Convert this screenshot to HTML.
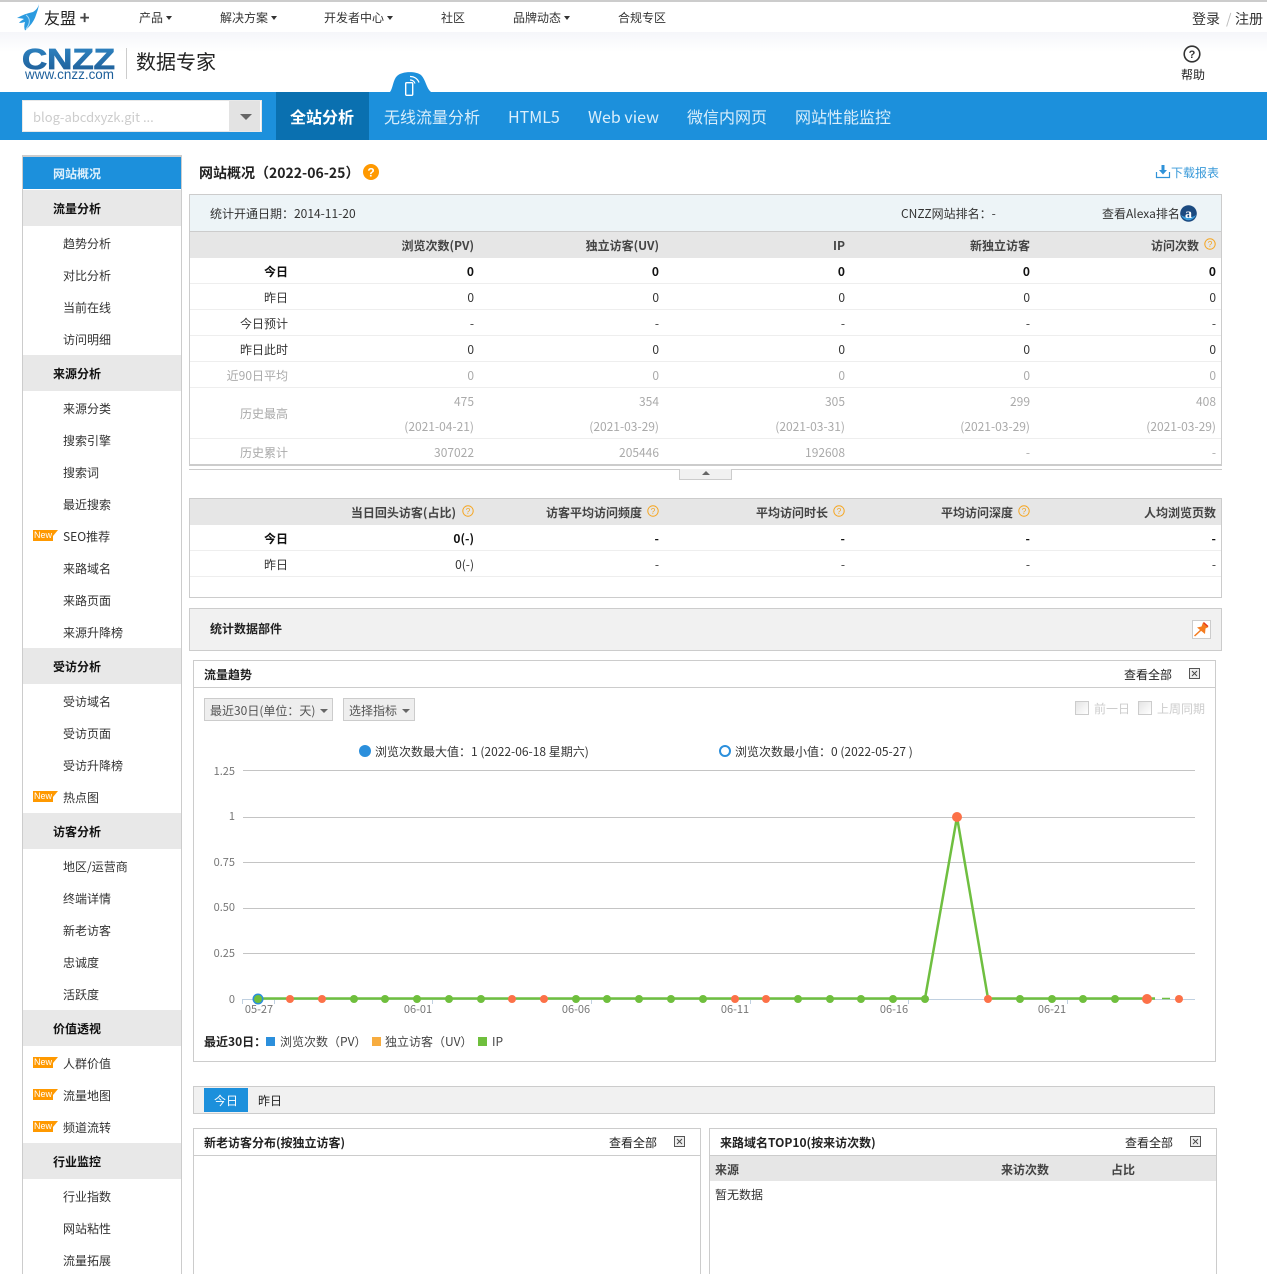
<!DOCTYPE html>
<html lang="zh-CN">
<head>
<meta charset="utf-8">
<title>CNZZ 网站概况</title>
<style>
*{box-sizing:border-box}
html{margin:0;padding:0;background:#fff;width:1267px;height:1274px;overflow:hidden}
body{margin:0;padding:0;background:#fff;position:relative;width:1267px;height:1274px;overflow:hidden;font:12px/20px "Noto Sans CJK SC","Liberation Sans",sans-serif;color:#333}
.a,.t{position:absolute}
.t{white-space:nowrap;height:20px;line-height:20px;transform:translateY(1px)}
.b{font-weight:bold}
.arr:after{content:"";display:inline-block;margin-left:3px;vertical-align:2px;border:3px solid transparent;border-top:4px solid #333;border-bottom:0}
.arr2:after{content:"";display:inline-block;margin-left:5px;vertical-align:2px;border:4px solid transparent;border-top:4px solid #666;border-bottom:0}
.g{position:absolute;left:23px;width:158px;height:36px;background:#e8e8e8;font-weight:bold;color:#111;line-height:38px;padding-left:30px}
.i{position:absolute;left:63px;height:20px;line-height:20px;white-space:nowrap;color:#333;transform:translateY(1px)}
.n{position:absolute;left:33px;width:20px;height:11px;background:#f90;color:#fff;font:9px/11px "Liberation Sans",sans-serif;padding-left:1px}
.n:after{content:"";position:absolute;left:20px;top:0;border-left:5px solid #f90;border-bottom:6px solid transparent}
.tab{position:absolute;top:106px;height:20px;line-height:20px;font-size:16px;color:#d9eefb;white-space:nowrap}
.panel{position:absolute;border:1px solid #ccc;background:#fff}
.r{position:absolute;left:190px;width:1031px;height:26px;line-height:26px;border-bottom:1px solid #eee;color:#333}
.r span{position:absolute;top:1px;white-space:nowrap}
.l{right:933px}.c1{right:747px}.c2{right:562px}.c3{right:376px}.c4{right:191px}.c5{right:5px}
.h{background:#e6e6e6;font-weight:bold;border-bottom:0;color:#444}
.bd{font-weight:bold;color:#111}
.gy{color:#aaa}
.nb{border-bottom:0}
</style>
</head>
<body>
<!-- top bar -->
<div class="a" style="left:0;top:0;width:1267px;height:2px;background:#ccc"></div>
<div class="a" style="left:0;top:32px;width:1267px;height:20px;background:linear-gradient(#f5f6fa,#fff)"></div>
<svg class="a" style="left:16px;top:3px" width="26" height="28" viewBox="0 0 26 28"><path d="M23 1 C22 5 20 7 17 9 C12 10 6 12 1 15 C4 15 6 15.500 8 16 C6 17 4 18.500 3 20 C5 20 7 19.500 9 19 C8 22 8 25 9 27.500 C13 24 18 19 20 12 C21.500 8 22.500 5 23 1Z" fill="#2b9be0"/><path d="M10 12 C14 15 15 20 10 26" stroke="#a8d8f5" stroke-width="1" fill="none"/></svg>
<div class="t" style="left:44px;top:6px;font-size:16px;color:#222">友盟 <span style="font-size:17px;font-weight:bold;color:#444">+</span></div>
<div class="t arr" style="left:139px;top:7px">产品</div>
<div class="t arr" style="left:220px;top:7px">解决方案</div>
<div class="t arr" style="left:324px;top:7px">开发者中心</div>
<div class="t" style="left:441px;top:7px">社区</div>
<div class="t arr" style="left:513px;top:7px">品牌动态</div>
<div class="t" style="left:618px;top:7px">合规专区</div>
<div class="t" style="left:1192px;top:8px;font-size:14px">登录</div>
<div class="t" style="left:1226px;top:8px;font-size:14px;color:#bbb">/</div>
<div class="t" style="left:1235px;top:8px;font-size:14px">注册</div>

<!-- logo -->
<svg class="a" style="left:20px;top:44px" width="100" height="40" viewBox="0 0 100 40">
<defs><linearGradient id="lg" x1="0" y1="0" x2="0" y2="1"><stop offset="0" stop-color="#2f86c4"/><stop offset="1" stop-color="#1d5a94"/></linearGradient></defs>
<text x="2" y="25" font-family="Liberation Sans" font-weight="bold" font-size="29" textLength="93" lengthAdjust="spacingAndGlyphs" fill="url(#lg)" stroke="url(#lg)" stroke-width=".8">CNZZ</text>
<text x="5" y="35" font-family="Liberation Sans" font-size="14" textLength="89" lengthAdjust="spacingAndGlyphs" fill="#1d5f9b">www.cnzz.com</text>
</svg>
<div class="a" style="left:126px;top:48px;width:1px;height:31px;background:#ccc"></div>
<div class="t" style="left:136px;top:50px;font-size:20px;color:#222">数据专家</div>
<svg class="a" style="left:1183px;top:45px" width="18" height="18" viewBox="0 0 18 18"><circle cx="9" cy="9" r="7.8" fill="none" stroke="#333" stroke-width="1.6"/><text x="9" y="13" text-anchor="middle" font-family="Liberation Sans" font-weight="bold" font-size="11" fill="#333">?</text></svg>
<div class="t" style="left:1181px;top:64px;color:#222">帮助</div>

<!-- nav -->
<div class="a" style="left:0;top:92px;width:1267px;height:48px;background:#1c90dc"></div>
<svg class="a" style="left:388px;top:70px" width="46" height="36" viewBox="0 0 46 36">
<path d="M2 22 C5 18 5 10 9 6 C14 1 28 1 33 5 C38 10 38 18 43 22Z" fill="#1c90dc"/>
<rect x="17.700" y="12.700" width="7" height="12.600" rx="1" fill="none" stroke="#fff" stroke-width="1.400"/>
<path d="M22 10 A5 5 0 0 1 27 13.500 M22 6.500 A9 9 0 0 1 31 12.500" fill="none" stroke="#fff" stroke-width="1.200"/>
</svg>
<div class="a" style="left:22px;top:100px;width:240px;height:32px;background:#fff;border:1px solid #e8e8e8"></div>
<div class="a" style="left:229px;top:101px;width:31px;height:30px;background:#e3e3e3"></div>
<div class="a" style="left:240px;top:114px;border:6px solid transparent;border-top:6px solid #666;border-bottom:0"></div>
<div class="t" style="left:33px;top:106px;font-size:13px;color:#ccc">blog-abcdxyzk.git ...</div>
<div class="a" style="left:276px;top:92px;width:93px;height:48px;background:#0a70b0"></div>
<div class="tab b" style="left:290px;color:#fff">全站分析</div>
<div class="tab" style="left:384px">无线流量分析</div>
<div class="tab" style="left:508px">HTML5</div>
<div class="tab" style="left:588px">Web view</div>
<div class="tab" style="left:687px">微信内网页</div>
<div class="tab" style="left:795px">网站性能监控</div>

<!-- sidebar -->
<div class="a" style="left:22px;top:155px;width:160px;height:1130px;border:1px solid #ccc;border-top:2px solid #ccc;border-bottom:0"></div>
<div class="a" style="left:23px;top:157px;width:158px;height:32px;background:#1c90dc;color:#dff1fc;font-weight:bold;line-height:34px;padding-left:30px">网站概况</div>
<div class="g" style="top:190px">流量分析</div>
<div class="i" style="top:233px">趋势分析</div>
<div class="i" style="top:265px">对比分析</div>
<div class="i" style="top:297px">当前在线</div>
<div class="i" style="top:329px">访问明细</div>
<div class="g" style="top:355px">来源分析</div>
<div class="i" style="top:398px">来源分类</div>
<div class="i" style="top:430px">搜索引擎</div>
<div class="i" style="top:462px">搜索词</div>
<div class="i" style="top:494px">最近搜索</div>
<div class="n" style="top:530px">New</div><div class="i" style="top:526px">SEO推荐</div>
<div class="i" style="top:558px">来路域名</div>
<div class="i" style="top:590px">来路页面</div>
<div class="i" style="top:622px">来源升降榜</div>
<div class="g" style="top:648px">受访分析</div>
<div class="i" style="top:691px">受访域名</div>
<div class="i" style="top:723px">受访页面</div>
<div class="i" style="top:755px">受访升降榜</div>
<div class="n" style="top:791px">New</div><div class="i" style="top:787px">热点图</div>
<div class="g" style="top:813px">访客分析</div>
<div class="i" style="top:856px">地区/运营商</div>
<div class="i" style="top:888px">终端详情</div>
<div class="i" style="top:920px">新老访客</div>
<div class="i" style="top:952px">忠诚度</div>
<div class="i" style="top:984px">活跃度</div>
<div class="g" style="top:1010px">价值透视</div>
<div class="n" style="top:1057px">New</div><div class="i" style="top:1053px">人群价值</div>
<div class="n" style="top:1089px">New</div><div class="i" style="top:1085px">流量地图</div>
<div class="n" style="top:1121px">New</div><div class="i" style="top:1117px">频道流转</div>
<div class="g" style="top:1143px">行业监控</div>
<div class="i" style="top:1186px">行业指数</div>
<div class="i" style="top:1218px">网站粘性</div>
<div class="i" style="top:1250px">流量拓展</div>

<!-- title -->
<div class="t b" style="left:199px;top:162px;font-size:14px;color:#222">网站概况（2022-06-25）</div>
<svg class="a" style="left:363px;top:164px" width="16" height="16" viewBox="0 0 16 16"><circle cx="8" cy="8" r="8" fill="#f90"/><text x="8" y="12.300" text-anchor="middle" font-family="Liberation Sans" font-weight="bold" font-size="12" fill="#fff">?</text></svg>
<svg class="a" style="left:1155px;top:164px" width="16" height="15" viewBox="0 0 16 15"><path d="M1.500 8 V13.500 H14.500 V8" fill="none" stroke="#2f92d8" stroke-width="1.200"/><path d="M6.500 1 H9.500 V6 H12 L8 10.500 L4 6 H6.500Z" fill="#2f92d8"/></svg>
<div class="t" style="left:1171px;top:162px;color:#3a9ad9">下载报表</div>

<!-- summary table -->
<div class="panel" style="left:189px;top:194px;width:1033px;height:272px;border-width:1px 1px 2px 1px"></div>
<div class="a" style="left:190px;top:195px;width:1031px;height:37px;background:#edf4f7;border-bottom:1px solid #ccc"></div>
<div class="t" style="left:210px;top:203px">统计开通日期：2014-11-20</div>
<div class="t" style="left:901px;top:203px">CNZZ网站排名：-</div>
<div class="t" style="left:1102px;top:203px">查看Alexa排名</div>
<svg class="a" style="left:1180px;top:205px" width="17" height="17" viewBox="0 0 17 17"><circle cx="8.500" cy="8.500" r="8.300" fill="#1b4a80"/><path d="M1 10 A8 8 0 0 0 16 10 A9 5 0 0 1 1 10Z" fill="#3a9ad9"/><text x="8.500" y="13" text-anchor="middle" font-family="Liberation Serif" font-weight="bold" font-size="14" fill="#fff">a</text></svg>

<div class="r h" style="top:232px;height:26px;line-height:26px"><span class="c1">浏览次数(PV)</span><span class="c2">独立访客(UV)</span><span class="c3">IP</span><span class="c4">新独立访客</span><span style="right:22px">访问次数</span></div>
<svg class="a" style="left:1204px;top:238px" width="12" height="12" viewBox="0 0 12 12"><circle cx="6" cy="6" r="5.200" fill="none" stroke="#f5a623" stroke-width="1"/><text x="6" y="9" text-anchor="middle" font-family="Liberation Sans" font-size="8.500" fill="#f5a623">?</text></svg>

<div class="r bd" style="top:258px"><span class="l">今日</span><span class="c1">0</span><span class="c2">0</span><span class="c3">0</span><span class="c4">0</span><span class="c5">0</span></div>
<div class="r" style="top:284px"><span class="l">昨日</span><span class="c1">0</span><span class="c2">0</span><span class="c3">0</span><span class="c4">0</span><span class="c5">0</span></div>
<div class="r" style="top:310px"><span class="l">今日预计</span><span class="c1">-</span><span class="c2">-</span><span class="c3">-</span><span class="c4">-</span><span class="c5">-</span></div>
<div class="r" style="top:336px"><span class="l">昨日此时</span><span class="c1">0</span><span class="c2">0</span><span class="c3">0</span><span class="c4">0</span><span class="c5">0</span></div>
<div class="r gy" style="top:362px"><span class="l">近90日平均</span><span class="c1">0</span><span class="c2">0</span><span class="c3">0</span><span class="c4">0</span><span class="c5">0</span></div>
<div class="r gy" style="top:388px;height:51px"><span class="l" style="top:13px">历史最高</span><span class="c1">475</span><span class="c2">354</span><span class="c3">305</span><span class="c4">299</span><span class="c5">408</span>
<span class="c1" style="top:26px">(2021-04-21)</span><span class="c2" style="top:26px">(2021-03-29)</span><span class="c3" style="top:26px">(2021-03-31)</span><span class="c4" style="top:26px">(2021-03-29)</span><span class="c5" style="top:26px">(2021-03-29)</span></div>
<div class="r gy nb" style="top:439px"><span class="l">历史累计</span><span class="c1">307022</span><span class="c2">205446</span><span class="c3">192608</span><span class="c4">-</span><span class="c5">-</span></div>
<div class="a" style="left:189px;top:469px;width:1033px;height:1px;background:#ccc"></div>
<div class="a" style="left:679px;top:469px;width:53px;height:11px;background:#f1f1f1;border:1px solid #ccc;border-top:0"></div>
<div class="a" style="left:702px;top:471px;border:4px solid transparent;border-bottom:4px solid #666;border-top:0"></div>

<!-- second table -->
<div class="panel" style="left:189px;top:498px;width:1033px;height:100px"></div>
<div class="r h" style="top:499px"><span style="right:765px">当日回头访客(占比)</span><span style="right:579px">访客平均访问频度</span><span style="right:393px">平均访问时长</span><span style="right:208px">平均访问深度</span><span class="c5">人均浏览页数</span></div>
<svg class="a" style="left:462px;top:505px" width="12" height="12" viewBox="0 0 12 12"><circle cx="6" cy="6" r="5.200" fill="none" stroke="#f5a623"/><text x="6" y="9" text-anchor="middle" font-family="Liberation Sans" font-size="8.500" fill="#f5a623">?</text></svg>
<svg class="a" style="left:647px;top:505px" width="12" height="12" viewBox="0 0 12 12"><circle cx="6" cy="6" r="5.200" fill="none" stroke="#f5a623"/><text x="6" y="9" text-anchor="middle" font-family="Liberation Sans" font-size="8.500" fill="#f5a623">?</text></svg>
<svg class="a" style="left:833px;top:505px" width="12" height="12" viewBox="0 0 12 12"><circle cx="6" cy="6" r="5.200" fill="none" stroke="#f5a623"/><text x="6" y="9" text-anchor="middle" font-family="Liberation Sans" font-size="8.500" fill="#f5a623">?</text></svg>
<svg class="a" style="left:1018px;top:505px" width="12" height="12" viewBox="0 0 12 12"><circle cx="6" cy="6" r="5.200" fill="none" stroke="#f5a623"/><text x="6" y="9" text-anchor="middle" font-family="Liberation Sans" font-size="8.500" fill="#f5a623">?</text></svg>
<div class="r bd" style="top:525px"><span class="l">今日</span><span class="c1">0(-)</span><span class="c2">-</span><span class="c3">-</span><span class="c4">-</span><span class="c5">-</span></div>
<div class="r" style="top:551px"><span class="l">昨日</span><span class="c1">0(-)</span><span class="c2">-</span><span class="c3">-</span><span class="c4">-</span><span class="c5">-</span></div>

<!-- widgets bar -->
<div class="panel" style="left:189px;top:608px;width:1033px;height:43px;background:#f1f1f1"></div>
<div class="t b" style="left:210px;top:618px;color:#222">统计数据部件</div>
<svg class="a" style="left:1192px;top:620px" width="19" height="19" viewBox="0 0 19 19"><rect x=".5" y=".5" width="18" height="18" fill="#fff" stroke="#ccc"/><path d="M11 2.500 L16.500 7 L13.500 8.500 L13 14 L5 7.500 L9.500 6.500Z" fill="#f57c1f"/><path d="M9 10 L2.500 16" stroke="#f57c1f" stroke-width="1.500"/><path d="M11.500 2.500 L16 6.500" stroke="#e8321a" stroke-width="1.200"/></svg>

<!-- chart panel -->
<div class="panel" style="left:193px;top:660px;width:1023px;height:402px"></div>
<div class="a" style="left:194px;top:687px;width:1021px;height:1px;background:#ccc"></div>
<div class="t b" style="left:204px;top:664px;color:#222">流量趋势</div>
<div class="t" style="left:1124px;top:664px;color:#222">查看全部</div>
<svg class="a" style="left:1189px;top:668px" width="11" height="11" viewBox="0 0 11 11"><rect x=".5" y=".5" width="10" height="10" fill="#eee" stroke="#555"/><path d="M3 3 L8 8 M8 3 L3 8" stroke="#444" stroke-width=".9"/></svg>
<div class="a" style="left:204px;top:698px;width:129px;height:23px;background:#eee;border:1px solid #ccc"></div>
<div class="t arr2" style="left:210px;top:700px;color:#555">最近30日(单位：天)</div>
<div class="a" style="left:343px;top:698px;width:72px;height:23px;background:#eee;border:1px solid #ccc"></div>
<div class="t arr2" style="left:349px;top:700px;color:#555">选择指标</div>
<div class="a" style="left:1075px;top:701px;width:14px;height:14px;border:1px solid #ccc;background:linear-gradient(135deg,#e4e4e4,#fff)"></div>
<div class="t" style="left:1094px;top:698px;color:#ccc">前一日</div>
<div class="a" style="left:1138px;top:701px;width:14px;height:14px;border:1px solid #ccc;background:linear-gradient(135deg,#e4e4e4,#fff)"></div>
<div class="t" style="left:1157px;top:698px;color:#ccc">上周同期</div>

<svg class="a" style="left:0;top:740px" width="1267" height="280" viewBox="0 740 1267 280" font-family="'Noto Sans CJK SC','Liberation Sans',sans-serif">
<circle cx="365" cy="751" r="6" fill="#2b8fdc"/>
<circle cx="725" cy="751" r="5" fill="#fff" stroke="#2b8fdc" stroke-width="2"/>
<g stroke="#c4c4c4" stroke-width="1"><path d="M243 770.500H1195M243 817.500H1195M243 862.500H1195M243 908.500H1195M243 953.500H1195"/></g>
<path d="M243 999.500H1195" stroke="#c0d0e0"/>
<path d="M242.500 999V1004M274.500 999V1004M432.500 999V1004M591.500 999V1004M750.500 999V1004M908.500 999V1004M1067.500 999V1004" stroke="#c0d0e0"/>
<g font-size="11" fill="#777" text-anchor="end"><text x="235" y="775">1.25</text><text x="235" y="820">1</text><text x="235" y="866">0.75</text><text x="235" y="911">0.50</text><text x="235" y="957">0.25</text><text x="235" y="1003">0</text></g>
<g font-size="11" fill="#777" text-anchor="middle"><text x="259" y="1013">05-27</text><text x="418" y="1013">06-01</text><text x="576" y="1013">06-06</text><text x="735" y="1013">06-11</text><text x="894" y="1013">06-16</text><text x="1052" y="1013">06-21</text></g>
<path d="M258 998.500H925L957 817L988 998.500H1155" fill="none" stroke="#6fbf40" stroke-width="2.500"/>
<path d="M1162 998.500H1170" stroke="#6fbf40" stroke-width="1.500"/>
<circle cx="258" cy="999" r="5.500" fill="#2b8fdc"/>
<g fill="#6fbf3d"><circle cx="258" cy="999" r="4"/><circle cx="354" cy="999" r="4"/><circle cx="385" cy="999" r="4"/><circle cx="417" cy="999" r="4"/><circle cx="449" cy="999" r="4"/><circle cx="481" cy="999" r="4"/><circle cx="576" cy="999" r="4"/><circle cx="607" cy="999" r="4"/><circle cx="639" cy="999" r="4"/><circle cx="671" cy="999" r="4"/><circle cx="703" cy="999" r="4"/><circle cx="798" cy="999" r="4"/><circle cx="830" cy="999" r="4"/><circle cx="861" cy="999" r="4"/><circle cx="893" cy="999" r="4"/><circle cx="925" cy="999" r="4"/><circle cx="1020" cy="999" r="4"/><circle cx="1052" cy="999" r="4"/><circle cx="1083" cy="999" r="4"/><circle cx="1115" cy="999" r="4"/></g>
<g fill="#fc7148"><circle cx="290" cy="999" r="4"/><circle cx="322" cy="999" r="4"/><circle cx="512" cy="999" r="4"/><circle cx="544" cy="999" r="4"/><circle cx="735" cy="999" r="4"/><circle cx="766" cy="999" r="4"/><circle cx="957" cy="817" r="5"/><circle cx="988" cy="999" r="4"/><circle cx="1147" cy="999" r="5"/><circle cx="1179" cy="999" r="4"/></g>
</svg>
<div class="t" style="left:375px;top:741px;color:#333">浏览次数最大值：1 (2022-06-18 星期六)</div>
<div class="t" style="left:735px;top:741px;color:#333">浏览次数最小值：0 (2022-05-27 )</div>

<div class="t b" style="left:204px;top:1031px;color:#222">最近30日：</div>
<div class="a" style="left:266px;top:1037px;width:9px;height:9px;background:#2b8fdc"></div>
<div class="t" style="left:280px;top:1031px;color:#444">浏览次数（PV）</div>
<div class="a" style="left:372px;top:1037px;width:9px;height:9px;background:#f7ac3f"></div>
<div class="t" style="left:385px;top:1031px;color:#444">独立访客（UV）</div>
<div class="a" style="left:478px;top:1037px;width:9px;height:9px;background:#6fbf3d"></div>
<div class="t" style="left:492px;top:1031px;color:#444">IP</div>

<!-- tabs -->
<div class="panel" style="left:193px;top:1086px;width:1022px;height:28px;background:#f1f1f1"></div>
<div class="a" style="left:204px;top:1088px;width:44px;height:24px;background:#1c90dc;color:#fff;text-align:center;line-height:26px">今日</div>
<div class="t" style="left:258px;top:1090px;color:#222">昨日</div>

<!-- bottom panels -->
<div class="panel" style="left:193px;top:1128px;width:508px;height:160px"></div>
<div class="a" style="left:194px;top:1155px;width:506px;height:1px;background:#ccc"></div>
<div class="t b" style="left:204px;top:1132px;color:#222">新老访客分布(按独立访客)</div>
<div class="t" style="left:609px;top:1132px;color:#222">查看全部</div>
<svg class="a" style="left:674px;top:1136px" width="11" height="11" viewBox="0 0 11 11"><rect x=".5" y=".5" width="10" height="10" fill="#eee" stroke="#555"/><path d="M3 3 L8 8 M8 3 L3 8" stroke="#444" stroke-width=".9"/></svg>

<div class="panel" style="left:709px;top:1128px;width:508px;height:160px"></div>
<div class="a" style="left:710px;top:1155px;width:506px;height:26px;background:#e6e6e6;border-top:1px solid #ccc"></div>
<div class="t b" style="left:720px;top:1132px;color:#222">来路域名TOP10(按来访次数)</div>
<div class="t" style="left:1125px;top:1132px;color:#222">查看全部</div>
<svg class="a" style="left:1190px;top:1136px" width="11" height="11" viewBox="0 0 11 11"><rect x=".5" y=".5" width="10" height="10" fill="#eee" stroke="#555"/><path d="M3 3 L8 8 M8 3 L3 8" stroke="#444" stroke-width=".9"/></svg>
<div class="t b" style="left:715px;top:1159px;color:#444">来源</div>
<div class="t b" style="left:1001px;top:1159px;color:#444">来访次数</div>
<div class="t b" style="left:1111px;top:1159px;color:#444">占比</div>
<div class="t" style="left:715px;top:1184px;color:#333">暂无数据</div>
</body>
</html>
